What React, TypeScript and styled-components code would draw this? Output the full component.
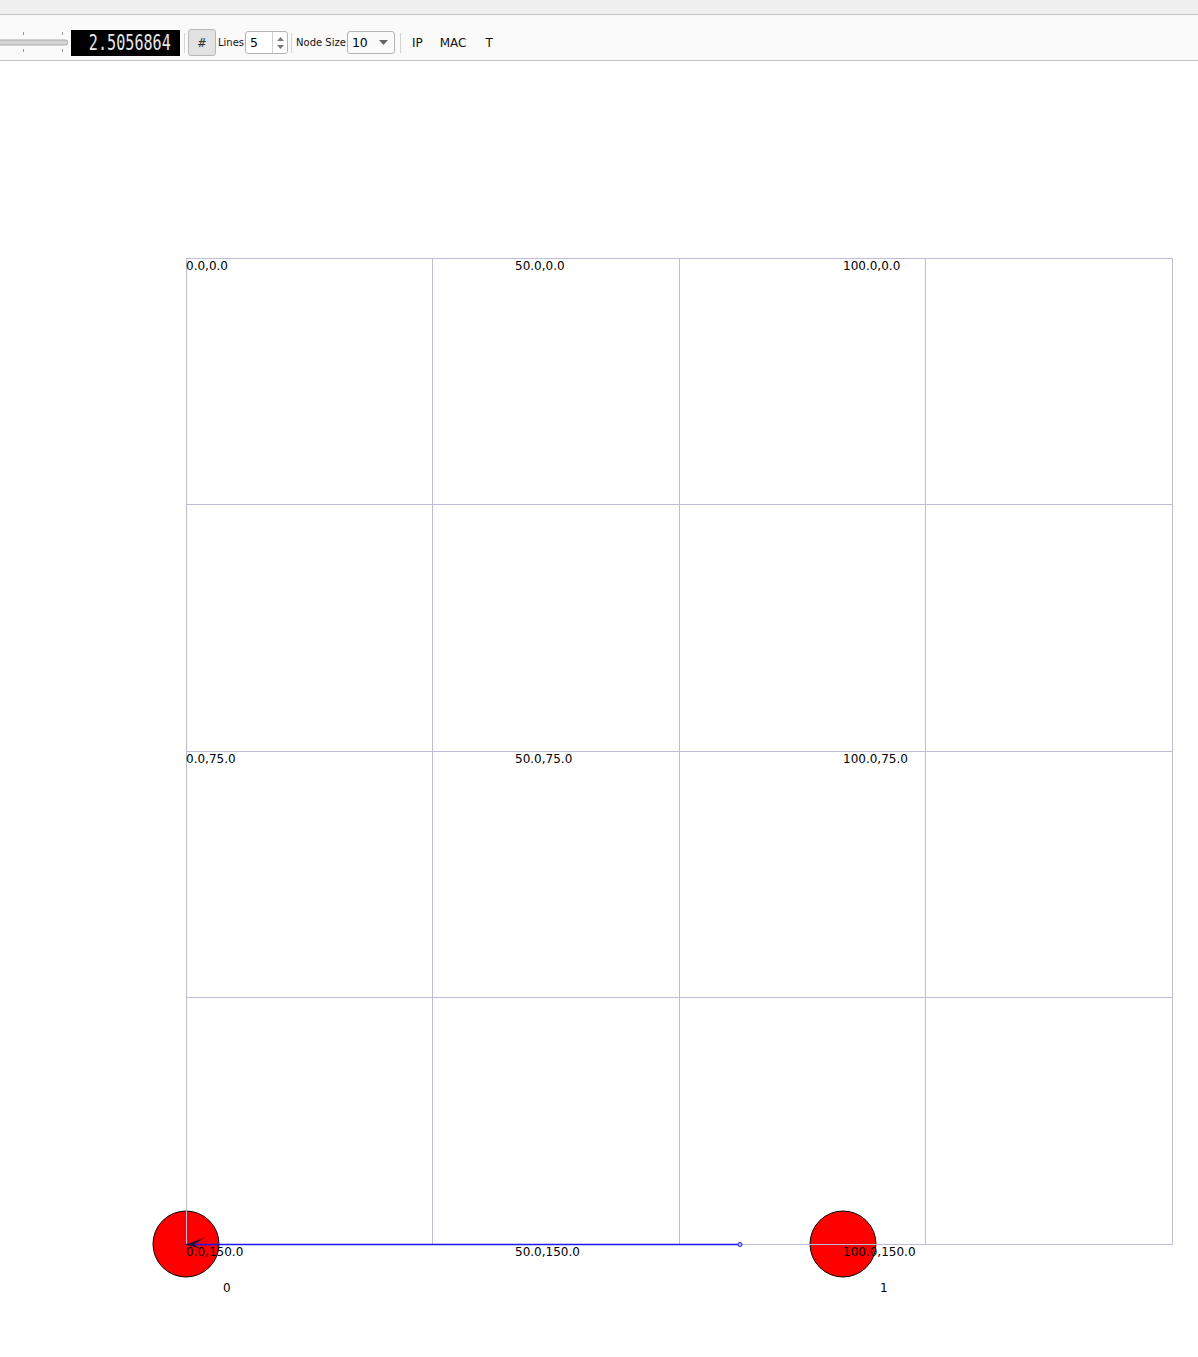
import React from 'react';
import styled, { createGlobalStyle } from 'styled-components';


// Style
const Global = createGlobalStyle`
  html, body {
    margin: 0;
    padding: 0;
    background: #fff;
    font-family: "DejaVu Sans", "Liberation Sans", sans-serif;
  }
`;

const Page = styled.div`
  width: 1198px;
  height: 1357px;
  display: flex;
  flex-direction: column;
  overflow: hidden;
`;

const TopStrip = styled.div`
  height: 14px;
  background: #efefef;
  border-bottom: 1px solid #c6c6c6;
`;

const Toolbar = styled.div`
  height: 46px;
  box-sizing: border-box;
  padding-top: 10px;
  background: #fafafa;
  border-bottom: 1px solid #c4c4c4;
  display: flex;
  align-items: center;
  color: #111;
`;

const Lcd = styled.div`
  width: 109px;
  height: 26px;
  margin-left: 3px;
  background: #000;
  color: #e8e8e8;
  display: flex;
  align-items: center;
  justify-content: flex-end;
  padding-right: 9px;
  box-sizing: border-box;
  font-family: "DejaVu Sans Mono", monospace;
  font-size: 21px;
  font-weight: 200;
  span {
    display: inline-block;
    transform: scaleX(0.72);
    transform-origin: right center;
  }
`;

const Sep = styled.div<{ $l: number; $r: number }>`
  width: 1px;
  height: 20px;
  background: #d4d4d4;
  margin: 0 ${p => p.$r}px 0 ${p => p.$l}px;
`;

const GridButton = styled.button`
  width: 28px;
  height: 27px;
  border: 1px solid #b8b8b8;
  border-radius: 3px;
  background: #e2e2e2;
  font-size: 13px;
  font-weight: normal;
  padding: 0;
  color: #333;
  display: flex;
  align-items: center;
  justify-content: center;
  font-family: "DejaVu Sans Mono", monospace;
`;

const Label = styled.span`
  margin: 0 1px 0 2px;
  font-size: 10px;
`;

const Field = styled.div<{ $w: number }>`
  width: ${p => p.$w}px;
  height: 23px;
  box-sizing: border-box;
  border: 1px solid #b4b4b4;
  border-radius: 3px;
  background: #fff;
  display: flex;
  align-items: center;
  padding-left: 4px;
  font-size: 12.5px;
  color: #000;
`;

const ComboField = styled(Field)`
  background: #fbfbfb;
`;

const FieldValue = styled.span`
  flex: 1;
`;

const SpinArrows = styled.div`
  width: 14px;
  height: 100%;
  border-left: 1px solid #d0d0d0;
  display: flex;
  align-items: center;
  justify-content: center;
`;

const DropArrow = styled.div`
  width: 20px;
  display: flex;
  justify-content: center;
`;

const TextButton = styled.span<{ $ml: number }>`
  margin-left: ${p => p.$ml}px;
  font-size: 12px;
  color: #111;
`;

const Canvas = styled.div`
  flex: 1;
  background: #fff;
`;


// Data
const xs = [186, 432, 679, 925, 1172];
const ys = [258, 504, 751, 997, 1244].map(v => v - 61);
const labelXs = [186, 515, 843];
const labelRows = [
  { y: 270 - 61, v: '0.0' },
  { y: 763 - 61, v: '75.0' },
  { y: 1256 - 61, v: '150.0' },
];
const labelVals = ['0.0', '50.0', '100.0'];
const gridColor = '#bcbcd6';


// Component
function Slider() {
  return (
    <svg width="68" height="35" viewBox="0 0 68 35">
      <line x1="23.5" y1="7" x2="23.5" y2="10" stroke="#999" />
      <line x1="62.5" y1="7" x2="62.5" y2="10" stroke="#999" />
      <line x1="23.5" y1="24" x2="23.5" y2="27" stroke="#999" />
      <line x1="62.5" y1="24" x2="62.5" y2="27" stroke="#999" />
      <rect x="-4" y="15" width="72" height="5" rx="2.5" fill="#d4d4d4" stroke="#a8a8a8" />
    </svg>
  );
}

function Field2D() {
  const y150 = 1244 - 61;
  return (
    <svg width="1198" height="1296" viewBox="0 0 1198 1296" style={{ display: 'block' }}>
      <circle cx="186" cy={y150} r="33" fill="#ff0000" stroke="#000" />
      <circle cx="843" cy={y150} r="33" fill="#ff0000" stroke="#000" />
      {xs.map(x => (
        <line key={'v' + x} x1={x + 0.5} y1={ys[0]} x2={x + 0.5} y2={ys[4] + 0.5} stroke={gridColor} />
      ))}
      {ys.map(y => (
        <line key={'h' + y} x1={186} y1={y + 0.5} x2={1172.5} y2={y + 0.5} stroke={gridColor} />
      ))}
      <line x1="186" y1={y150 + 0.5} x2="738" y2={y150 + 0.5} stroke="#1a1aee" strokeWidth="1.3" />
      <circle cx="740" cy={y150 + 0.5} r="2" fill="#b8b8ff" stroke="#1a1aee" />
      <polygon points={`186,${y150 + 0.5} 205,${y150 - 6.5} 194,${y150 + 0.5} 201,${y150 + 5}`} fill="#24122e" />
      {labelRows.map(r =>
        labelXs.map((x, i) => (
          <text key={r.v + x} x={x} y={r.y} fontSize="12" fontFamily="DejaVu Sans, sans-serif" fill="#000">
            {labelVals[i]},{r.v}
          </text>
        ))
      )}
      <text x="223" y={1292 - 61} fontSize="12" fontFamily="DejaVu Sans, sans-serif" fill="#000">0</text>
      <text x="880" y={1292 - 61} fontSize="12" fontFamily="DejaVu Sans, sans-serif" fill="#000">1</text>
    </svg>
  );
}

function App() {
  return (
    <Page>
      <Global />
      <TopStrip />
      <Toolbar>
        <Slider />
        <Lcd><span>2.5056864</span></Lcd>
        <Sep $l={4} $r={3} />
        <GridButton>#</GridButton>
        <Label>Lines</Label>
        <Field $w={43}>
          <FieldValue>5</FieldValue>
          <SpinArrows>
            <svg width="9" height="14" viewBox="0 0 9 14">
              <polygon points="1,5 8,5 4.5,1" fill="#777" />
              <polygon points="1,9 8,9 4.5,13" fill="#777" />
            </svg>
          </SpinArrows>
        </Field>
        <Sep $l={3} $r={2} />
        <Label>Node Size</Label>
        <ComboField $w={48}>
          <FieldValue>10</FieldValue>
          <DropArrow>
            <svg width="9" height="5" viewBox="0 0 9 5">
              <polygon points="0,0 9,0 4.5,5" fill="#666" />
            </svg>
          </DropArrow>
        </ComboField>
        <Sep $l={5} $r={0} />
        <TextButton $ml={11}>IP</TextButton>
        <TextButton $ml={17}>MAC</TextButton>
        <TextButton $ml={19}>T</TextButton>
      </Toolbar>
      <Canvas>
        <Field2D />
      </Canvas>
    </Page>
  );
}

export default App;
